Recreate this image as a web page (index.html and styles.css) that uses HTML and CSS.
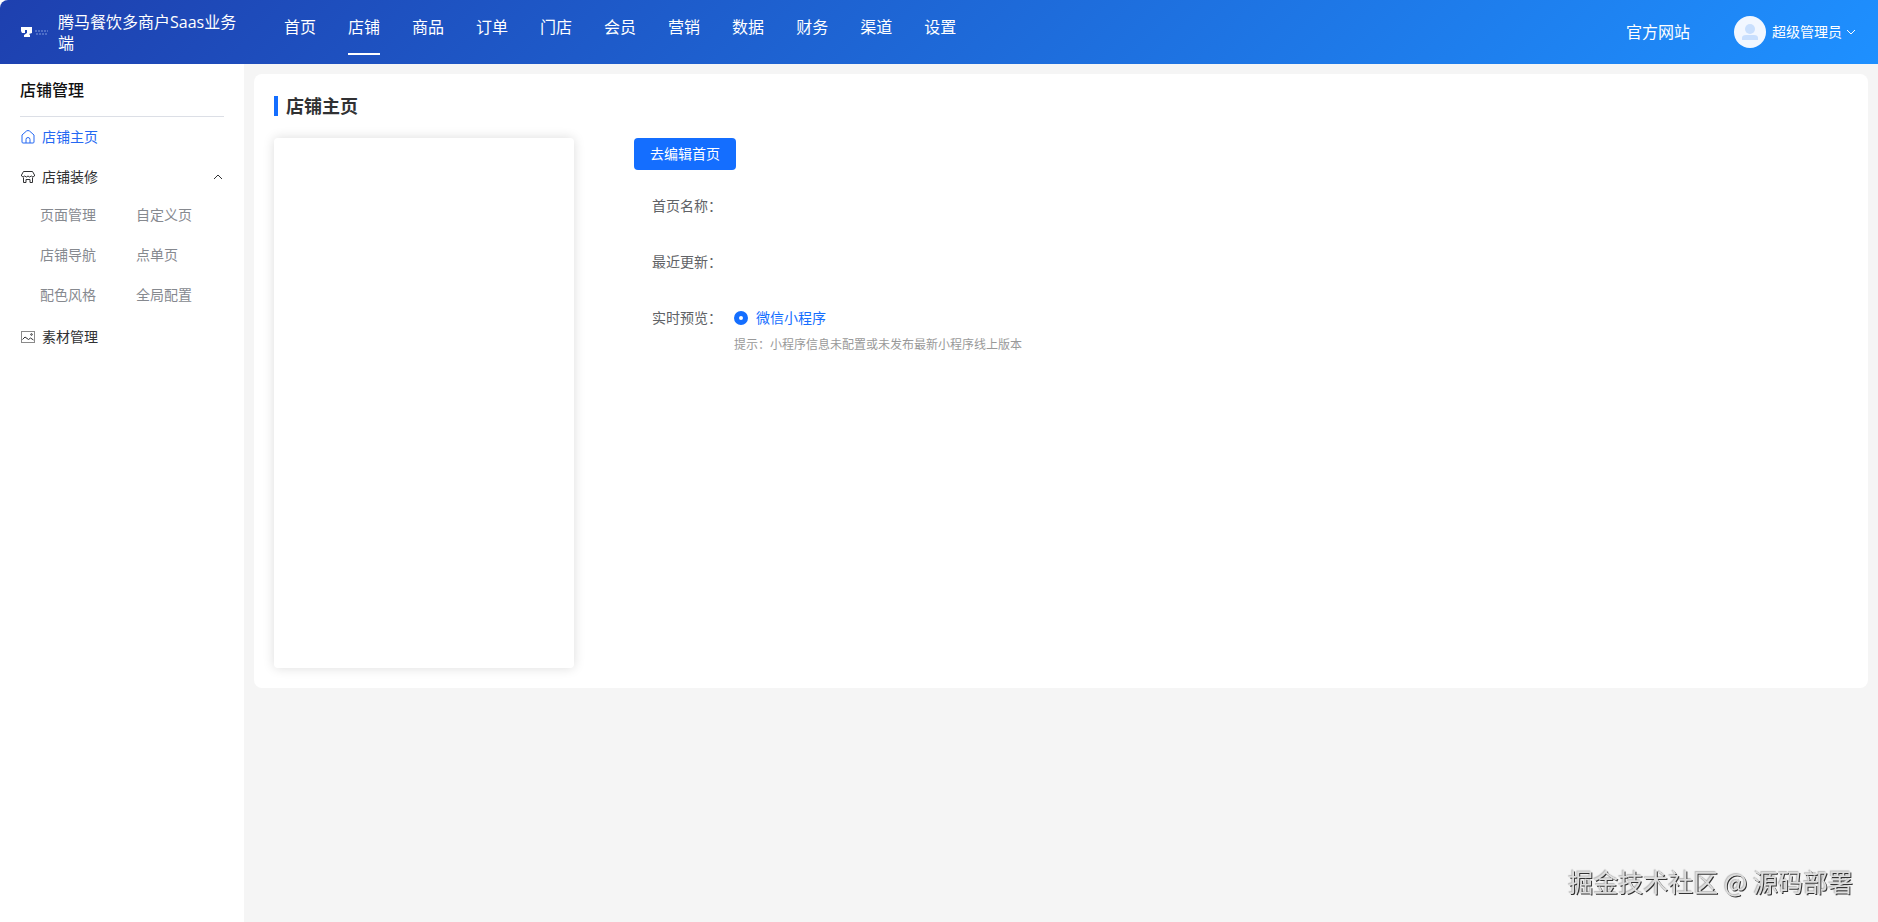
FILE: index.html
```html
<!DOCTYPE html>
<html lang="zh-CN">
<head>
  <meta charset="UTF-8" />
  <meta name="viewport" content="width=device-width, initial-scale=1" />
  <title>店铺主页</title>
  <link rel="stylesheet" href="styles.css">
</head>
<body>

  <header class="header">
    <div class="brand">
      <svg class="brand-logo" viewBox="0 0 30 12" aria-hidden="true">
        <path d="M1 1h11v6l-3 1 1 1v2H4V9l3-2V4H5v3H2L1 5z" fill="#fff" />
        <path d="M15 5h13M16 8h11" stroke="#6f8bd6" stroke-width="2" stroke-dasharray="2 1" opacity=".6" />
      </svg>
      <span class="brand-name">腾马餐饮多商户Saas业务端</span>
    </div>

    <nav class="nav" aria-label="主导航">
      <a href="#">首页</a>
      <a href="#" class="active">店铺</a>
      <a href="#">商品</a>
      <a href="#">订单</a>
      <a href="#">门店</a>
      <a href="#">会员</a>
      <a href="#">营销</a>
      <a href="#">数据</a>
      <a href="#">财务</a>
      <a href="#">渠道</a>
      <a href="#">设置</a>
    </nav>

    <div class="header-right">
      <a href="#" class="site-link">官方网站</a>
      <button class="user" type="button">
        <svg class="avatar" viewBox="0 0 32 32" aria-hidden="true">
          <circle cx="16" cy="16" r="16" fill="#f2f7ff" />
          <circle cx="16" cy="13" r="5" fill="#c9dffd" />
          <path d="M8 24v-2q0-3 4-3h8q4 0 4 3v2z" fill="#c9dffd" />
        </svg>
        <span>超级管理员</span>
        <svg class="caret" viewBox="0 0 10 10" aria-hidden="true">
          <path d="M1 3l4 4 4-4" />
        </svg>
      </button>
    </div>
  </header>

  <div class="layout">
    <aside class="sidebar">
      <h2>店铺管理</h2>

      <a href="#" class="menu-item active">
        <svg class="icon" viewBox="0 0 14 14" aria-hidden="true">
          <path d="M1 5l4.500-4q1.500-1 3 0L13 5v7q0 1-1 1H2q-1 0-1-1z" />
          <path d="M5 13V9.500a2 2 0 0 1 4 0V13" />
        </svg>
        <span>店铺主页</span>
      </a>

      <button class="menu-item" type="button" aria-expanded="true">
        <svg class="icon" viewBox="0 0 14 14" aria-hidden="true">
          <path d="M2.500 1.500h9L13.500 5v1q-1.500 2-3.200 0-1.700 2-3.300 0-1.600 2-3.300 0-1.700 2-3.200 0V5z" />
          <path d="M2.500 7.500v5h2.500v-3h4v3h2.500v-5" />
        </svg>
        <span>店铺装修</span>
        <svg class="caret" viewBox="0 0 12 12" aria-hidden="true">
          <path d="M2 8l4-4 4 4" />
        </svg>
      </button>
      <div class="submenu">
        <a href="#">页面管理</a>
        <a href="#">自定义页</a>
        <a href="#">店铺导航</a>
        <a href="#">点单页</a>
        <a href="#">配色风格</a>
        <a href="#">全局配置</a>
      </div>

      <a href="#" class="menu-item">
        <svg class="icon" viewBox="0 0 14 14" aria-hidden="true">
          <rect x=".5" y="1.500" width="13" height="11" stroke="#8a8a8a" />
          <path d="M1.500 9.500L4 7l3.500 2.500 2-1.500 3 2" />
          <circle cx="10.500" cy="4.500" r=".8" />
        </svg>
        <span>素材管理</span>
      </a>
    </aside>

    <main class="main">
      <section class="card">
        <h1>店铺主页</h1>
        <div class="card-body">
          <div class="phone"></div>
          <div class="info">
            <button class="btn" type="button">去编辑首页</button>
            <dl>
              <dt>首页名称：</dt>
              <dd></dd>
              <dt>最近更新：</dt>
              <dd></dd>
              <dt>实时预览：</dt>
              <dd>
                <label class="radio">
                  <input type="radio" name="preview" checked />
                  <span>微信小程序</span>
                </label>
                <p class="tip">提示：小程序信息未配置或未发布最新小程序线上版本</p>
              </dd>
            </dl>
          </div>
        </div>
      </section>
    </main>
  </div>

  <div class="watermark">掘金技术社区 @ 源码部署</div>

</body>
</html>
```
FILE: styles.css
```css
*, *::before, *::after {
  box-sizing: border-box;
}

body {
  margin: 0;
  min-height: 100vh;
  display: flex;
  flex-direction: column;
  background: #fff;
  font-family: "Open Sans", "Noto Sans CJK SC", sans-serif;
  font-size: 14px;
  line-height: 20px;
  color: #303133;
}

a { color: inherit; text-decoration: none; }
button { padding: 0; border: none; background: none; font: inherit; color: inherit; cursor: pointer; }

/* Header */
.header {
  display: flex;
  height: 64px;
  border-top-left-radius: 8px;
  background: linear-gradient(135deg, #1e40af 0%, #1e90ff 100%);
  color: #fff;
}

.brand {
  width: 264px;
  padding: 0 20px;
  display: flex;
  align-items: center;
  gap: 8px;
}
.brand-logo { width: 30px; height: 12px; flex: none; }
.brand-name { width: 182px; padding-top: 2px; font-size: 16px; line-height: 21px; }

.nav { display: flex; padding-left: 20px; gap: 32px; }
.nav a {
  height: 55px;
  font-size: 16px;
  line-height: 55px;
  border-bottom: 2px solid transparent;
}
.nav a.active { border-bottom-color: #fff; }

.header-right {
  margin-left: auto;
  padding-right: 22px;
  display: flex;
  align-items: center;
  gap: 44px;
}
.site-link { font-size: 16px; }
.user { display: flex; align-items: center; }
.avatar { width: 32px; height: 32px; margin-right: 6px; }
.user .caret { margin-left: 4px; }
.caret { width: 10px; height: 10px; fill: none; stroke: currentColor; stroke-width: 1; }

/* Sidebar */
.layout { flex: 1; display: flex; }

.sidebar { width: 244px; padding: 0 20px; }
.sidebar h2 {
  margin: 0;
  height: 53px;
  font-size: 16px;
  font-weight: 500;
  line-height: 52px;
  color: #111;
  border-bottom: 1px solid #dcdfe6;
}

.menu-item {
  width: 100%;
  height: 40px;
  display: flex;
  align-items: center;
  gap: 7px;
  padding-left: 1px;
}
.menu-item.active { color: #2468f2; }
.menu-item .caret { width: 12px; height: 12px; margin-left: auto; }
.icon { width: 14px; height: 14px; fill: none; stroke: currentColor; stroke-width: 1; }

.submenu {
  display: grid;
  grid-template-columns: 96px 1fr;
  row-gap: 4px;
  padding: 0 0 4px 20px;
  line-height: 36px;
  color: #86898f;
}

/* Content */
.main { flex: 1; padding: 10px; background: #f5f5f5; }

.card { padding: 20px; border-radius: 8px; background: #fff; }
.card h1 {
  display: flex;
  align-items: center;
  gap: 8px;
  margin: 0 0 20px;
  font-size: 18px;
  font-weight: 700;
  line-height: 24px;
}
.card h1::before { content: ''; width: 4px; height: 20px; background: #146eff; }

.card-body { display: flex; gap: 60px; }
.phone {
  width: 300px;
  height: 530px;
  border-radius: 4px;
  box-shadow: 0 0 12px rgba(0, 0, 0, 0.14);
}

.btn {
  height: 32px;
  padding: 0 16px;
  border-radius: 4px;
  background: #146eff;
  color: #fff;
}

.info dl {
  display: grid;
  grid-template-columns: 82px 1fr;
  row-gap: 24px;
  margin: 20px 0 0 18px;
  line-height: 32px;
  color: #606266;
}
.info dd { margin: 0; }

.radio { display: flex; align-items: center; gap: 8px; color: #146eff; }
.radio input {
  appearance: none;
  width: 14px;
  height: 14px;
  margin: 0;
  border: 5px solid #146eff;
  border-radius: 50%;
  background: #fff;
}
.tip { margin: 0; font-size: 12px; line-height: 22px; color: #999; }

.watermark {
  position: fixed;
  right: 25px;
  bottom: 23px;
  font-family: "Noto Sans CJK SC", sans-serif;
  font-size: 25px;
  line-height: 36px;
  color: #ddd;
  text-shadow: 1px 1px 0 #333, -1px -1px 1px #bbb;
}
```
